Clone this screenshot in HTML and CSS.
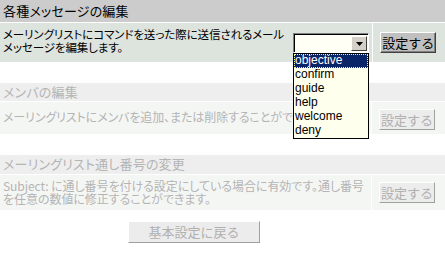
FILE: index.html
```html
<!DOCTYPE html>
<html lang="ja">
<head>
<meta charset="utf-8">
<link rel="stylesheet" href="styles.css">
</head>
<body>
<div class="page">
  <section class="sect">
    <div class="head h1">各種メッセージの編集</div>
    <div class="row r1">
      <div class="desc narrow">メーリングリストにコマンドを送った際に送信されるメールメッセージを編集します。</div>
      <div class="selcell">
        <div class="select"><span class="field"></span><span class="arrow"><svg width="7" height="4" viewBox="0 0 7 4"><path d="M0 0H7L3.5 4Z" fill="#000"/></svg></span></div>
        <ul class="list">
          <li class="sel">objective</li>
          <li>confirm</li>
          <li>guide</li>
          <li>help</li>
          <li>welcome</li>
          <li>deny</li>
        </ul>
      </div>
      <div class="btncell first"><button class="btn">設定する</button></div>
    </div>
  </section>

  <section class="sect off">
    <div class="head h2">メンバの編集</div>
    <div class="row r2">
      <div class="desc oneline">メーリングリストにメンバを追加、または削除することができます。</div>
      <div class="btncell"><button class="btn" disabled>設定する</button></div>
    </div>
  </section>

  <section class="sect off last">
    <div class="head h3">メーリングリスト通し番号の変更</div>
    <div class="row r3">
      <div class="desc">Subject: に通し番号を付ける設定にしている場合に有効です。通し番号を任意の数値に修正することができます。</div>
      <div class="btncell"><button class="btn" disabled>設定する</button></div>
    </div>
  </section>

  <div class="back"><button class="backbtn" disabled>基本設定に戻る</button></div>
</div>
</body>
</html>
```

FILE: styles.css
```css
html, body {
  margin: 0;
  padding: 0;
  background: #ffffff;
}
body {
  font-family: "Noto Sans CJK JP", "DejaVu Sans", sans-serif;
  font-size: 12px;
  color: #000;
  width: 445px;
  height: 259px;
  overflow: hidden;
}
.page {
  display: flex;
  flex-direction: column;
}
.sect {
  display: flex;
  flex-direction: column;
  margin-bottom: 21px;
}
.sect.last {
  margin-bottom: 11px;
}
.head {
  padding-left: 3px;
  background: #cccccc;
  font-size: 13px;
  font-feature-settings: "palt";
  letter-spacing: 0.2px;
  white-space: nowrap;
}
.head.h1 {
  height: 22px;
  line-height: 21px;
}
.head.h2 {
  height: 18px;
  line-height: 17px;
}
.head.h3 {
  height: 19px;
  line-height: 18px;
}
.row {
  display: flex;
  align-items: stretch;
  margin-top: 1px;
}
.row.r1 { height: 39px; }
.row.r2 { height: 32px; }
.row.r3 { height: 35px; }
.desc {
  flex: 1;
  background: #dde3dd;
  padding: 5px 2px 0 3px;
  line-height: 13px;
  font-size: 12px;
  font-feature-settings: "palt";
  letter-spacing: -0.1px;
  overflow: hidden;
}
.r3 .desc {
  padding-top: 4px;
  letter-spacing: -0.05px;
  padding-right: 6px;
}
.desc.narrow {
  flex: 0 0 288px;
  padding-right: 0;
  font-size: 11.5px;
  letter-spacing: -0.1px;
}
.desc.oneline {
  white-space: nowrap;
  padding-top: 8px;
}
.selcell {
  position: relative;
  width: 83px;
  background: #dde3dd;
}
.select {
  position: absolute;
  left: 2px;
  top: 10px;
  width: 76px;
  height: 20px;
  box-sizing: border-box;
  display: flex;
  border-top: 1px solid #808080;
  border-left: 1px solid #808080;
  border-right: 1px solid #ffffff;
  border-bottom: 1px solid #ffffff;
  background: #fffff6;
  box-shadow: inset 1px 1px 0 #000;
}
.field {
  flex: 1;
}
.arrow {
  width: 16px;
  margin: 2px 1px 1px 0;
  box-sizing: border-box;
  background: #d4d0c8;
  border-top: 1px solid #fff;
  border-left: 1px solid #fff;
  border-right: 1px solid #404040;
  border-bottom: 1px solid #404040;
  display: flex;
  align-items: center;
  justify-content: center;
}
.list {
  position: absolute;
  left: 2px;
  top: 30px;
  width: 76px;
  box-sizing: border-box;
  margin: 0;
  padding: 0;
  list-style: none;
  background: #ffffee;
  border: 1px solid #000;
  z-index: 5;
  font-family: "Liberation Sans", sans-serif;
  font-size: 12px;
}
.list li {
  height: 14px;
  line-height: 13px;
  padding-left: 1px;
}
.list li.sel {
  background: #0a246a;
  color: #fff;
  outline: 1px dotted #ffff80;
  outline-offset: -1px;
}
.btncell {
  width: 73px;
  margin-left: 1px;
  background: #dde3dd;
  display: flex;
  justify-content: flex-start;
  align-items: flex-start;
  padding: 7px 0 0 7px;
  box-sizing: border-box;
}
.btncell.first {
  padding-top: 9px;
}
.btn {
  width: 56px;
  height: 21px;
  padding: 0;
  font-family: "Noto Sans CJK JP", sans-serif;
  font-size: 13px;
  line-height: 17px;
  color: #000;
  background: #c0c0c0;
  border-top: 1px solid #ffffff;
  border-left: 1px solid #ffffff;
  border-right: 1px solid #404040;
  border-bottom: 1px solid #404040;
  box-shadow: inset -1px -1px 0 #808080;
}
.off .head {
  background: #eeeeee;
  color: #b4b4b4;
}
.off .desc,
.off .btncell {
  background: #f4f6f4;
  color: #b4b4b4;
}
.off .btn {
  background: #ececec;
  color: #b0b0b0;
  border-top: 1px solid #ffffff;
  border-left: 1px solid #ffffff;
  border-right: 1px solid #a0a0a0;
  border-bottom: 1px solid #a0a0a0;
  box-shadow: none;
}
.back {
  display: flex;
  padding-left: 128px;
}
.backbtn {
  width: 132px;
  height: 22px;
  padding: 0;
  font-family: "Noto Sans CJK JP", sans-serif;
  font-size: 13px;
  line-height: 18px;
  background: #ececec;
  color: #b0b0b0;
  border-top: 1px solid #ffffff;
  border-left: 1px solid #ffffff;
  border-right: 1px solid #a0a0a0;
  border-bottom: 1px solid #a0a0a0;
}
```
